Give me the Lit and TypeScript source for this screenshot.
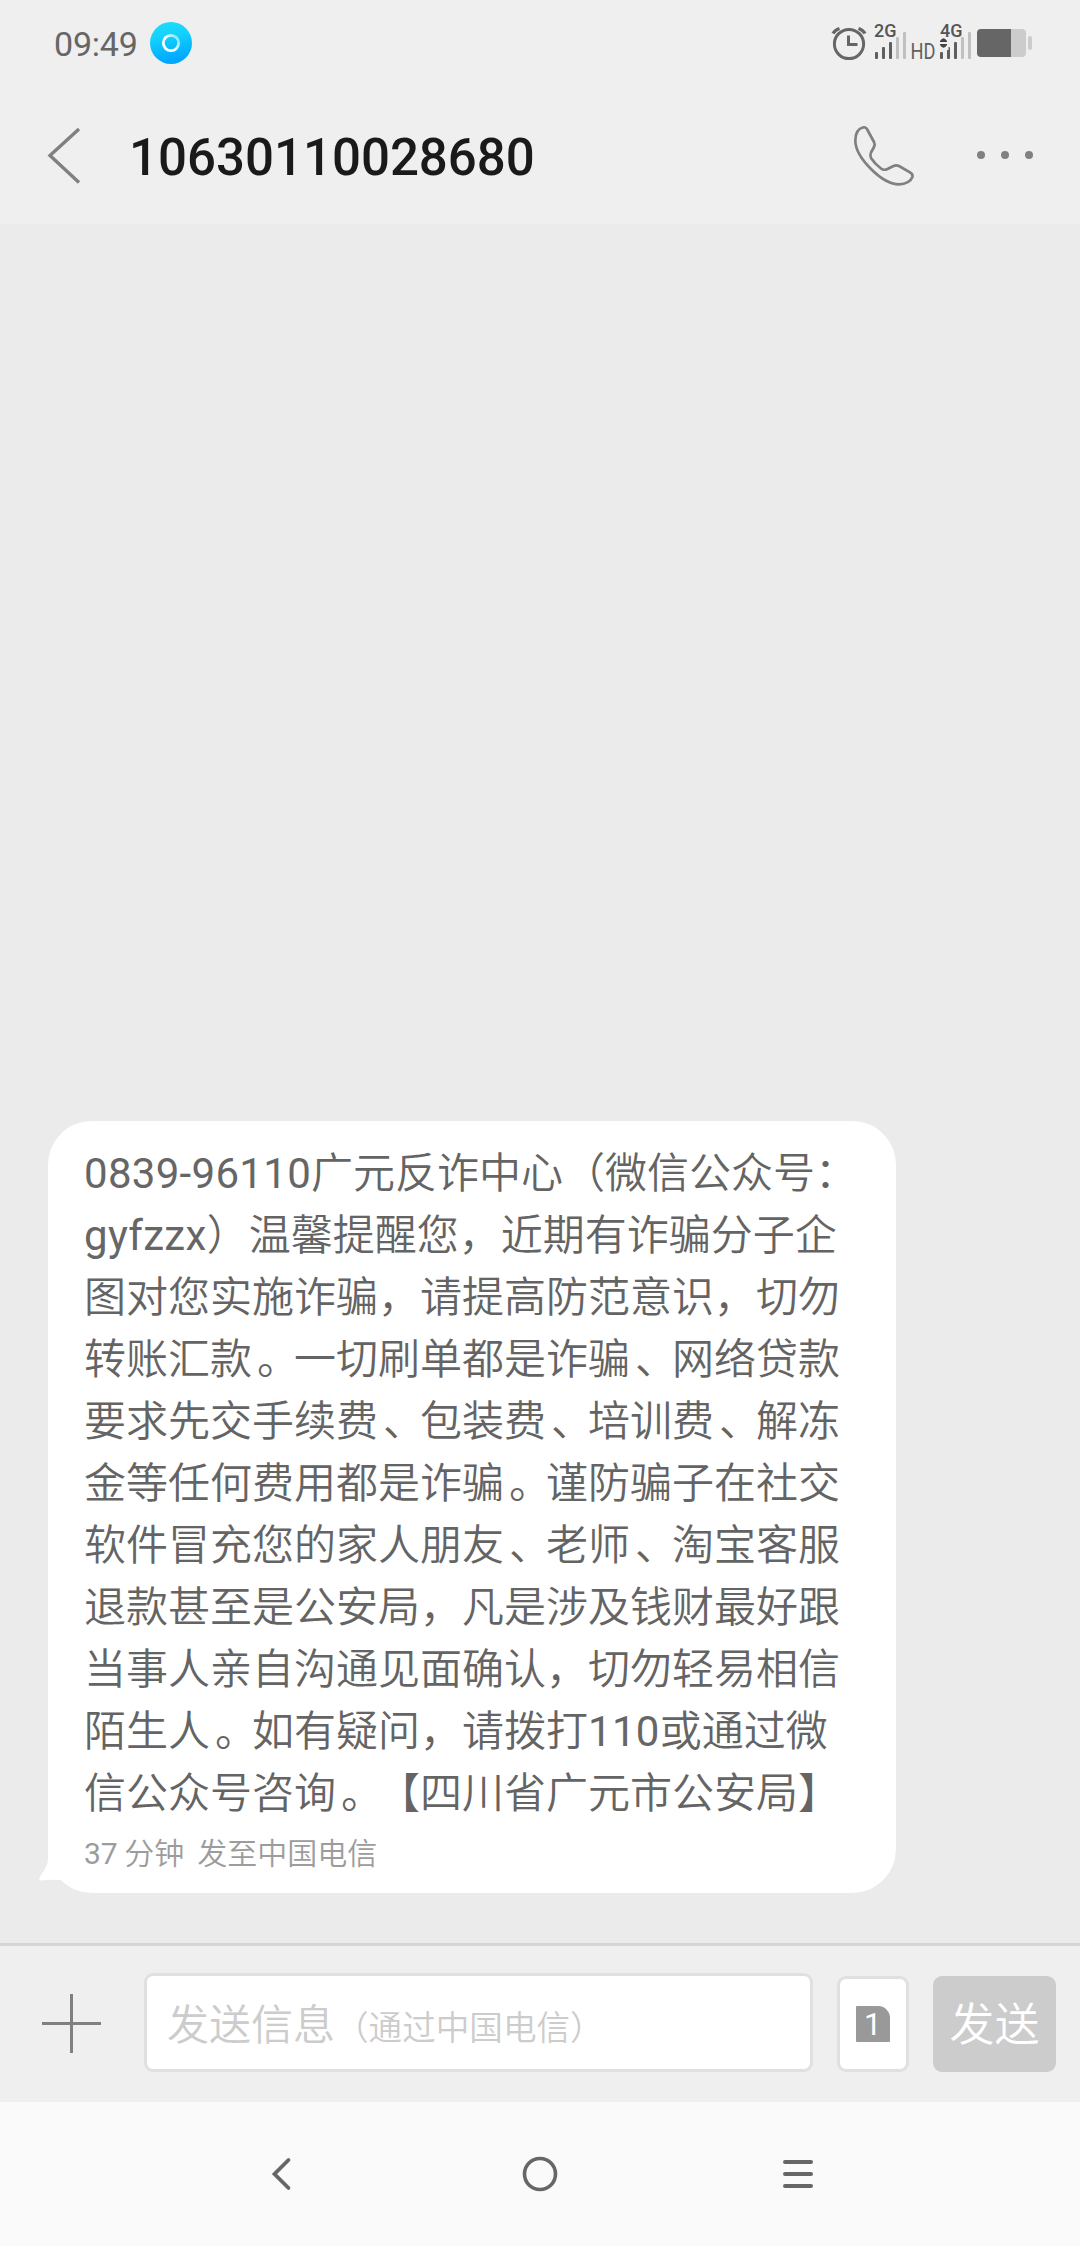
import { LitElement, html, css, svg } from "lit";
import { customElement, property } from "lit/decorators.js";

const FONT = css`Roboto, "Noto Sans CJK SC", sans-serif`;
const CJK = css`"Noto Sans CJK SC DemiLight", "Noto Sans CJK SC", sans-serif`;

@customElement("status-bar")
class StatusBar extends LitElement {
  static styles = css`
    :host { display: flex; justify-content: space-between; align-items: center; height: 86px; padding: 0 48px 0 54px; color: #666; }
    .left { display: flex; align-items: center; gap: 12px; }
    .time { font: 34px/40px ${FONT}; letter-spacing: -0.2px; width: 84px; padding-top: 2px; }
    svg { display: block; }
    .tag { font: 500 18px Roboto, sans-serif; fill: #555; }
    .hd { font: 400 22px Roboto, sans-serif; fill: #606060; }
  `;

  private bars(x: number) {
    const heights = [7, 12, 17, 22, 27];
    return heights.map(
      (h, i) => svg`<rect x=${x + i * 7} y=${59 - h} width="3" height=${h} rx="1" fill=${i < 3 ? "#5e5e5e" : "#c0c0c0"} />`
    );
  }

  render() {
    return html`
      <div class="left">
        <span class="time">09:49</span>
        <svg width="42" height="42" viewBox="0 0 42 42">
          <defs>
            <linearGradient id="g" x1="0" y1="0" x2=".2" y2="1">
              <stop offset="0" stop-color="#22dcfa" />
              <stop offset=".4" stop-color="#12d2fd" />
              <stop offset="1" stop-color="#00a6ff" />
            </linearGradient>
            <linearGradient id="r" x1="0" y1="1" x2="1" y2=".3">
              <stop offset=".5" stop-color="#fff" />
              <stop offset="1" stop-color="#8be9fd" />
            </linearGradient>
          </defs>
          <circle cx="21" cy="21" r="21" fill="url(#g)" />
          <circle cx="21" cy="21" r="7.7" fill="none" stroke="url(#r)" stroke-width="2.8" />
        </svg>
      </div>
      <svg width="202" height="86" viewBox="830 0 202 86">
        <g fill="none" stroke="#666" stroke-width="3">
          <circle cx="849" cy="44" r="14.6" />
          <path d="M848.5 35.5V44.5H857.5" stroke-width="3" />
          <path d="M833 33.5Q835 30 839.5 28.5M858.5 28.5Q863 30 865 33.5" stroke-width="3.4" />
        </g>
        <text class="tag" x="874" y="37">2G</text>
        ${this.bars(875)}
        <text class="hd" x="910.5" y="59" textLength="25" lengthAdjust="spacingAndGlyphs">HD</text>
        <text class="tag" x="940" y="37">4G</text>
        ${this.bars(940)}
        <rect x="938.5" y="38" width="10" height="12" fill="#efefef" />
        <path d="M940 42V41Q943.5 35.500 947 41V42ZM940 44H947V45Q943.500 50.500 940 45Z" fill="#444" />
        <path d="M981 29H1011V57H981Q977 57 977 53V33Q977 29 981 29Z" fill="#666" />
        <path d="M1011 29H1022Q1026 29 1026 33V53Q1026 57 1022 57H1011Z" fill="#ccc" />
        <rect x="1028" y="36" width="4" height="14" rx="2" fill="#ccc" />
      </svg>
    `;
  }
}

@customElement("title-bar")
class TitleBar extends LitElement {
  @property() number = "";
  static styles = css`
    :host { display: flex; align-items: center; height: 138px; padding: 1px 47px 0 46px; box-sizing: border-box; }
    h1 { margin: 0 0 0 47px; flex: 1; font: 500 51px/60px ${FONT}; color: #1a1a1a; padding-top: 4px; }
    svg { display: block; }
    .call { margin-right: 60px; }
  `;
  render() {
    return html`
      <svg width="36" height="60" viewBox="46 126 36 60" fill="none" stroke="#808080" stroke-width="3.400">
        <path d="M79 129L50 155.500L79 182.500" />
      </svg>
      <h1>${this.number}</h1>
      <svg class="call" width="64" height="64" viewBox="852 124 64 64" fill="none" stroke="#808080" stroke-width="2.700" stroke-linejoin="round">
        <path d="M863.500 127.300C858 128.500 855.300 134 855.300 141C855.600 150 862 160 871 169C880 178 889 184.300 899 184.300C906 184.300 911 181 912.400 177C913 175 912 173.500 910 172.300L899 166C897 165 895.500 165 893.500 166L887.500 169C885 170.200 883 170 881 168.500C877 165.500 873.500 162 871 158C870 156.200 870 154.500 871 152.500L874 147C875 145 875 144 874 142L867.500 130C866.500 127.700 865.500 127 863.500 127.300Z" />
      </svg>
      <svg width="57" height="64" viewBox="976 124 57 64" fill="#808080">
        <circle cx="981" cy="155" r="4" /><circle cx="1005" cy="155" r="4" /><circle cx="1029" cy="155" r="4" />
      </svg>
    `;
  }
}

@customElement("message-bubble")
class MessageBubble extends LitElement {
  @property({ attribute: false }) lines: string[] = [];
  @property() meta = "";
  static styles = css`
    :host { display: block; position: relative; width: 848px; height: 772px; box-sizing: border-box; padding: 22px 0 0 36px; background: #fff; border-radius: 44px; }
    .line { font: 350 42px/62px Roboto, ${CJK}; color: #646464; height: 62px; white-space: pre; text-spacing-trim: space-all; }
    .latin { font-weight: 400; letter-spacing: 0.3px; color: #666; }
    .mark { padding-left: 5px; letter-spacing: -5px; }
    .meta { font: 30px/40px Roboto, ${CJK}; color: #9c9c9c; white-space: pre; padding-top: 9px; word-spacing: -0.9px; }
    .tail { position: absolute; left: -9px; bottom: 0; }
  `;
  private piece(p: string) {
    if (/^[。、]$/.test(p)) return html`<span class="mark">${p}</span>`;
    if (/^[\w-]+$/.test(p)) return html`<span class="latin">${p}</span>`;
    return p;
  }
  render() {
    return html`
      ${this.lines.map((l) => html`<div class="line">${l.split(/([。、]|[\w-]+)/).map((p) => this.piece(p))}</div>`)}
      <div class="meta">${this.meta}</div>
      <svg class="tail" width="50" height="50" viewBox="39 1843 50 50" fill="#fff">
        <path d="M48 1848V1858C48 1867 42.500 1872 39.300 1878Q38.600 1881 42 1880.500Q52 1879.500 61 1880L70 1886V1848Z" />
      </svg>
    `;
  }
}

@customElement("compose-bar")
class ComposeBar extends LitElement {
  static styles = css`
    :host { display: flex; align-items: flex-end; height: 159px; box-sizing: border-box; border-top: 3px solid #d6d6d6; padding: 0 24px 30px 42px; background: #efefef; }
    svg { display: block; }
    .plus { margin: 0 43px 19px 0; }
    .input { box-sizing: border-box; width: 669px; height: 99px; border: 3px solid #e0e0e0; border-radius: 9px; background: #fff; padding: 0 0 0 20px; font: 350 42px/99px Roboto, ${CJK}; color: #ccc; white-space: nowrap; }
    .input small { font-size: 33.600px; }
    .sim { box-sizing: border-box; width: 72px; height: 96px; margin: 0 24px; border: 3px solid #e0e0e0; border-radius: 9px; background: #fff; display: flex; align-items: center; justify-content: center; }
    .num { font: 400 31px Roboto, sans-serif; fill: #fff; }
    .send { width: 123px; height: 96px; border-radius: 9px; background: #ccc; color: #fff; font: 350 45px/100px Roboto, ${CJK}; text-align: center; }
  `;
  render() {
    return html`
      <svg class="plus" width="59" height="59" viewBox="0 0 59 59" stroke="#808080" stroke-width="3"><path d="M29.500 0V59M0 29.500H59" /></svg>
      <div class="input">发送信息<small>（通过中国电信）</small></div>
      <div class="sim">
        <svg width="34" height="36" viewBox="0 0 34 36">
          <path d="M1 0H23Q27 0 30 3L32 5.500Q34 8 34 11V35Q34 36 33 36H1Q0 36 0 35V1Q0 0 1 0Z" fill="#999" />
          <text class="num" x="8" y="29">1</text>
        </svg>
      </div>
      <div class="send">发送</div>
    `;
  }
}

@customElement("nav-bar")
class NavBar extends LitElement {
  static styles = css`
    :host { display: grid; grid-template-columns: 258px 258px 258px; justify-content: center; justify-items: center; align-items: center; height: 144px; background: #fafafa; }
    svg { display: block; }
  `;
  render() {
    return html`
      <svg width="36" height="36" viewBox="0 0 36 36" fill="none" stroke="#666" stroke-width="3.800" stroke-linecap="round"><path d="M24.500 4L10.500 18L24.500 32" /></svg>
      <svg width="36" height="36" viewBox="0 0 36 36" fill="none" stroke="#666" stroke-width="3.600"><circle cx="18" cy="18" r="15.500" /></svg>
      <svg width="36" height="36" viewBox="0 0 36 36" fill="none" stroke="#666" stroke-width="4" stroke-linecap="round"><path d="M5 6H31M5 18H31M5 30H31" /></svg>
    `;
  }
}

@customElement("app-root")
class AppRoot extends LitElement {
  static styles = css`
    :host { display: flex; flex-direction: column; width: 1080px; height: 2246px; background: #ebebeb; overflow: hidden; }
    header { background: #efefef; }
    main { flex: 1; display: flex; flex-direction: column; justify-content: flex-end; padding: 0 48px 50px; }
  `;
  private lines = [
    "0839-96110广元反诈中心（微信公众号：",
    "gyfzzx）温馨提醒您，近期有诈骗分子企",
    "图对您实施诈骗，请提高防范意识，切勿",
    "转账汇款。一切刷单都是诈骗、网络贷款",
    "要求先交手续费、包装费、培训费、解冻",
    "金等任何费用都是诈骗。谨防骗子在社交",
    "软件冒充您的家人朋友、老师、淘宝客服",
    "退款甚至是公安局，凡是涉及钱财最好跟",
    "当事人亲自沟通见面确认，切勿轻易相信",
    "陌生人。如有疑问，请拨打110或通过微",
    "信公众号咨询。【四川省广元市公安局】",
  ];
  render() {
    return html`
      <header>
        <status-bar></status-bar>
        <title-bar number="10630110028680"></title-bar>
      </header>
      <main>
        <message-bubble .lines=${this.lines} meta="37 分钟  发至中国电信"></message-bubble>
      </main>
      <compose-bar></compose-bar>
      <nav-bar></nav-bar>
    `;
  }
}
